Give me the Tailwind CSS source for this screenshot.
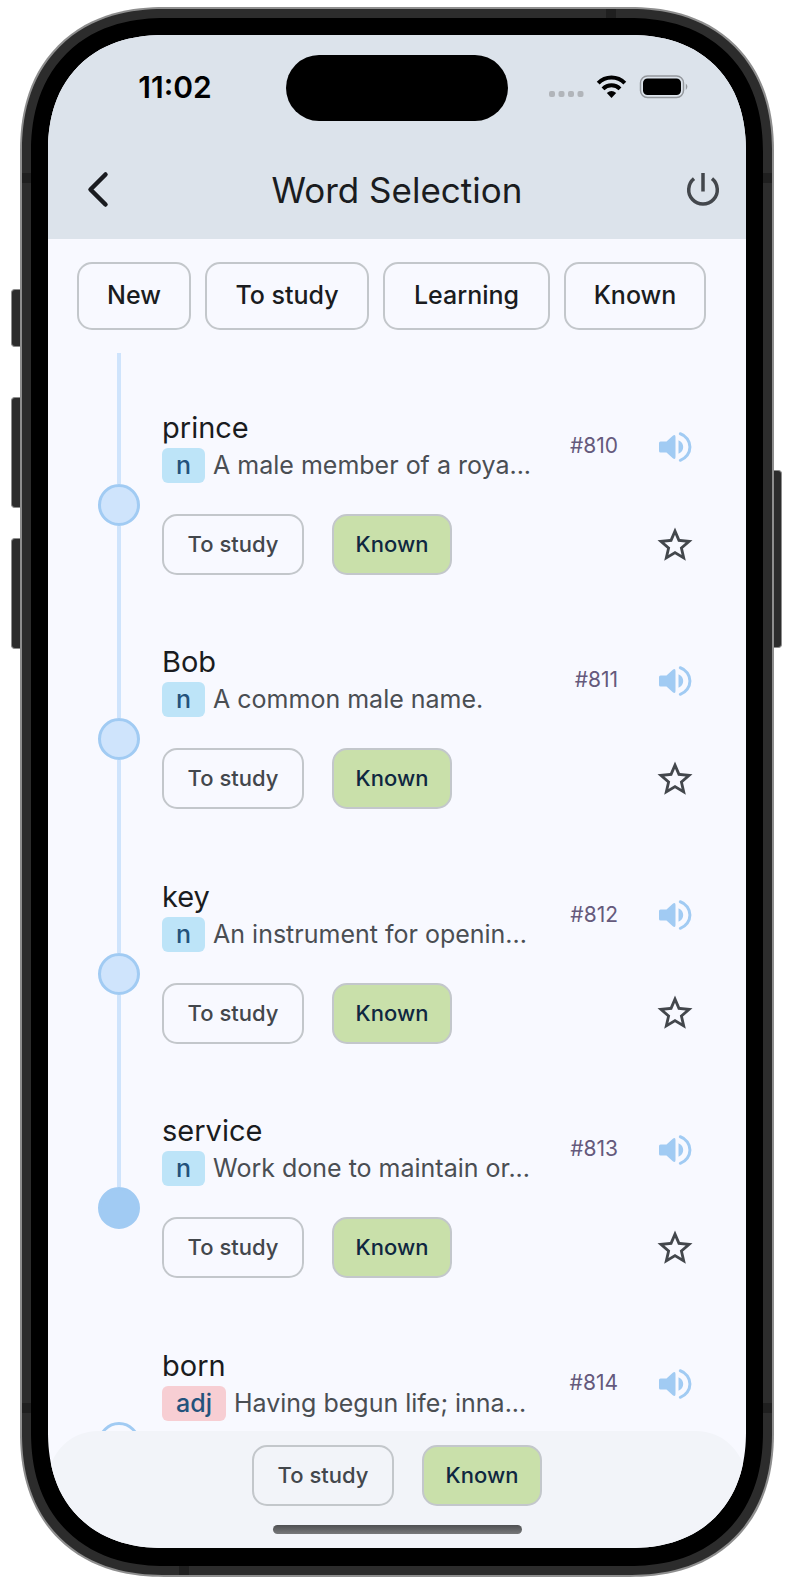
<!DOCTYPE html>
<html lang="en">
<head>
<meta charset="utf-8">
<meta name="viewport" content="width=device-width, initial-scale=1">
<title>Word Selection</title>
<script src="https://cdn.jsdelivr.net/npm/@tailwindcss/browser@4"></script>
</head>
<body class="bg-white font-['Inter',sans-serif] text-[#1a1c20]">
<svg class="hidden" aria-hidden="true">
  <symbol id="volume" viewBox="0 0 40 40">
    <path fill="currentColor" d="M4.500 14.500h6l6-5.600q3-2.400 3 1v20.200q0 3.400-3 1l-6-5.600h-6q-1.500 0-1.500-1.500v-8q0-1.500 1.500-1.500zM22.500 13.200q4.700 2.300 4.700 6.800t-4.700 6.800z"/>
    <path fill="none" stroke="currentColor" stroke-width="3" stroke-linecap="round" d="M24.300 6.700a14 14 0 0 1 0 26.600"/>
  </symbol>
  <symbol id="star" viewBox="0 0 24 24">
    <path fill="currentColor" d="M22 9.240l-7.190-.62L12 2 9.190 8.630 2 9.240l5.460 4.730L5.820 21 12 17.270 18.180 21l-1.630-7.030L22 9.240zM12 15.400l-3.760 2.270 1-4.280-3.320-2.880 4.380-.38L12 6.100l1.710 4.040 4.380.38-3.320 2.880 1 4.280L12 15.400z"/>
  </symbol>
</svg>
<div class="flex h-screen px-5 pt-[7px] pb-1">
  <div class="relative flex min-w-0 flex-1 rounded-[144px] border-2 border-[#8e8e8e] bg-[#2c2c2c] p-[9px] [corner-shape:superellipse(1.17)]">
    <span class="absolute top-[280px] -left-[11px] h-[58px] w-[9px] rounded-l-sm border border-r-0 border-[#8e8e8e] bg-[#2c2c2c]"></span>
    <span class="absolute top-[388px] -left-[11px] h-[111px] w-[9px] rounded-l-sm border border-r-0 border-[#8e8e8e] bg-[#2c2c2c]"></span>
    <span class="absolute top-[529px] -left-[11px] h-[111px] w-[9px] rounded-l-sm border border-r-0 border-[#8e8e8e] bg-[#2c2c2c]"></span>
    <span class="absolute top-[461px] -right-[10px] h-[178px] w-[8px] rounded-r-sm border border-l-0 border-[#8e8e8e] bg-[#2c2c2c]"></span>
    <span class="absolute top-[164px] left-0 h-[10px] w-[9px] bg-[#1f1f1f]"></span>
    <span class="absolute top-[164px] right-0 h-[10px] w-[9px] bg-[#1f1f1f]"></span>
    <span class="absolute bottom-[162px] left-0 h-[10px] w-[9px] bg-[#1f1f1f]"></span>
    <span class="absolute right-0 bottom-[162px] h-[10px] w-[9px] bg-[#1f1f1f]"></span>
    <span class="absolute top-0 right-[156px] h-[9px] w-[10px] bg-[#1f1f1f]"></span>
    <span class="absolute bottom-0 left-[157px] h-[9px] w-[10px] bg-[#1f1f1f]"></span>

    <div class="flex min-w-0 flex-1 rounded-[134px] bg-black px-[17px] pt-[17px] pb-[18px] [corner-shape:superellipse(1.17)]">
      <main class="flex min-w-0 flex-1 flex-col overflow-hidden rounded-[116px] bg-[#f8f9ff] [corner-shape:superellipse(1.17)]">

        <header class="bg-[#dce3eb]">
          <div class="grid h-[104px] grid-cols-[1fr_222px_1fr] items-center">
            <time class="justify-self-center pl-4 text-[30px] leading-none font-semibold text-black">11:02</time>
            <div class="mt-0.5 h-[66px] rounded-full bg-black"></div>
            <svg class="ml-[41px] h-6 w-[140px]" viewBox="0 0 140 24" aria-label="Wi-Fi on, battery full">
              <g fill="#b1b5ba"><rect x="0" y="16" width="6" height="6" rx="2"/><rect x="9.500" y="16" width="6" height="6" rx="2"/><rect x="19" y="16" width="6" height="6" rx="2"/><rect x="28.500" y="16" width="6" height="6" rx="2"/></g>
              <g fill="none" stroke="#000" stroke-width="4"><path d="M49.200 8.200a18.500 18.500 0 0 1 26.600 0"/><path d="M54 13.800a12 12 0 0 1 17 0"/></g>
              <path d="M57.800 18q4.700-4 9.400 0L62.500 23z"/>
              <rect x="91.500" y="1" width="43" height="21.500" rx="7" fill="none" stroke="#94989d" stroke-width="1.500"/>
              <rect x="94" y="3.500" width="38" height="16.500" rx="4.500"/>
              <path d="M136.800 8.500q3.200 3.200 0 6.500z" fill="#94989d"/>
            </svg>
          </div>
          <div class="grid h-[100px] grid-cols-[1fr_auto_1fr] items-center">
            <button type="button" aria-label="Back" class="ml-8 size-8">
              <svg class="size-8 overflow-visible" viewBox="0 0 32 32" fill="none" stroke="#1a1c20" stroke-width="4.500" stroke-linecap="round" stroke-linejoin="round"><path d="M25.500 1.500 10.500 16.500 25.500 31.500"/></svg>
            </button>
            <h1 class="pt-0.5 text-[35px] leading-none">Word Selection</h1>
            <button type="button" aria-label="Power" class="mr-[27px] size-8 justify-self-end">
              <svg class="size-8 overflow-visible" viewBox="0 0 32 32" fill="none" stroke="#43474c" stroke-width="3.500"><path d="M16 0v18.500M7 5.700a14.300 14.300 0 1 0 18 0"/></svg>
            </button>
          </div>
        </header>

        <nav class="grid grid-cols-[114fr_164fr_167fr_142fr] gap-[14px] pt-[23px] pr-10 pb-[23px] pl-[29px] text-[25px] font-medium">
          <button type="button" class="h-[68px] rounded-[15px] border-2 border-[#c3c7cb]">New</button>
          <button type="button" class="h-[68px] rounded-[15px] border-2 border-[#c3c7cb]">To study</button>
          <button type="button" class="h-[68px] rounded-[15px] border-2 border-[#c3c7cb]">Learning</button>
          <button type="button" class="h-[68px] rounded-[15px] border-2 border-[#c3c7cb]">Known</button>
        </nav>

        <section class="min-h-0 flex-1 overflow-hidden">
          <div id="words" class="grid h-[1172px] grid-rows-5"></div>
        </section>

        <footer class="flex h-[117px] flex-col items-center justify-between rounded-t-[50px] bg-[#f2f4f9] pt-[14px] pb-[14px]">
          <div class="flex gap-7 text-[22px] font-medium">
            <button type="button" class="h-[61px] w-[142px] rounded-[15px] border-2 border-[#c3c7cb] text-[#43474c]">To study</button>
            <button type="button" class="h-[61px] w-[120px] rounded-[15px] border-2 border-[#c3c7cb] bg-[#c9e0aa] text-[#0f2740]">Known</button>
          </div>
          <div class="h-[9px] w-[249px] rounded-full bg-linear-to-b from-[#4f5052] to-[#77787a]"></div>
        </footer>
      </main>
    </div>
  </div>
</div>

<template id="word">
  <article class="grid grid-cols-[42px_1fr] gap-x-[22px] pr-[50px] pl-[50px]">
    <div class="flex flex-col items-center">
      <span data-above class="h-[131px] w-1 bg-[#cfe4fc]"></span>
      <span data-dot class="size-[42px] shrink-0 rounded-full border-[3px] border-[#a1cbf3]"></span>
      <span data-below class="w-1 flex-1 bg-[#cfe4fc]"></span>
    </div>
    <div class="min-w-0 pt-[57px]">
      <div class="flex h-[73px] items-center">
        <div class="min-w-0 flex-1">
          <h2 data-name class="text-[29px] leading-[36px]"></h2>
          <p class="mt-0.5 flex items-center gap-2 text-[25px] leading-[35px] whitespace-nowrap text-[#4a4e53]">
            <span data-pos class="rounded-md px-[14px] font-medium text-[#23527c]"></span><span data-def></span>
          </p>
        </div>
        <span data-num class="pb-0.5 text-[21px] text-[#655a7c]"></span>
        <button type="button" aria-label="Listen" class="ml-[38px] size-10 pb-0.5 text-[#a1cbf3]"><svg class="size-10"><use href="#volume"/></svg></button>
      </div>
      <div data-actions class="mt-[31px] flex items-center gap-7 text-[22px] font-medium">
        <button type="button" class="h-[61px] w-[142px] rounded-[15px] border-2 border-[#c3c7cb] text-[#43474c]">To study</button>
        <button type="button" class="h-[61px] w-[120px] rounded-[15px] border-2 border-[#c3c7cb] bg-[#c9e0aa] text-[#0f2740]">Known</button>
        <button type="button" aria-label="Favourite" class="ml-auto size-[42px] text-[#43474c]"><svg class="size-[42px]"><use href="#star"/></svg></button>
      </div>
    </div>
  </article>
</template>
<script>
  const words = [
    ["prince", "n", "A male member of a roya...", "#810", "passed"],
    ["Bob", "n", "A common male name.", "#811", "passed"],
    ["key", "n", "An instrument for openin...", "#812", "passed"],
    ["service", "n", "Work done to maintain or...", "#813", "current"],
    ["born", "adj", "Having begun life; inna...", "#814", "next"]
  ];
  const dotStyle = { passed: "bg-[#cfe4fc]", current: "bg-[#a1cbf3]", next: "bg-transparent" };
  const posStyle = { n: "bg-[#bde4f8]", adj: "bg-[#f7ced3]" };
  for (const [name, pos, def, num, state] of words) {
    const row = document.getElementById("word").content.cloneNode(true);
    const part = key => row.querySelector(`[data-${key}]`);
    part("name").textContent = name;
    part("pos").textContent = pos;
    part("pos").classList.add(posStyle[pos]);
    part("def").textContent = def;
    part("num").textContent = num;
    part("dot").classList.add(dotStyle[state]);
    if (state !== "passed") part("below").classList.add("invisible");
    if (state === "next") {
      part("above").classList.add("invisible");
      part("actions").remove();
    }
    document.getElementById("words").append(row);
  }
</script>
</body>
</html>
